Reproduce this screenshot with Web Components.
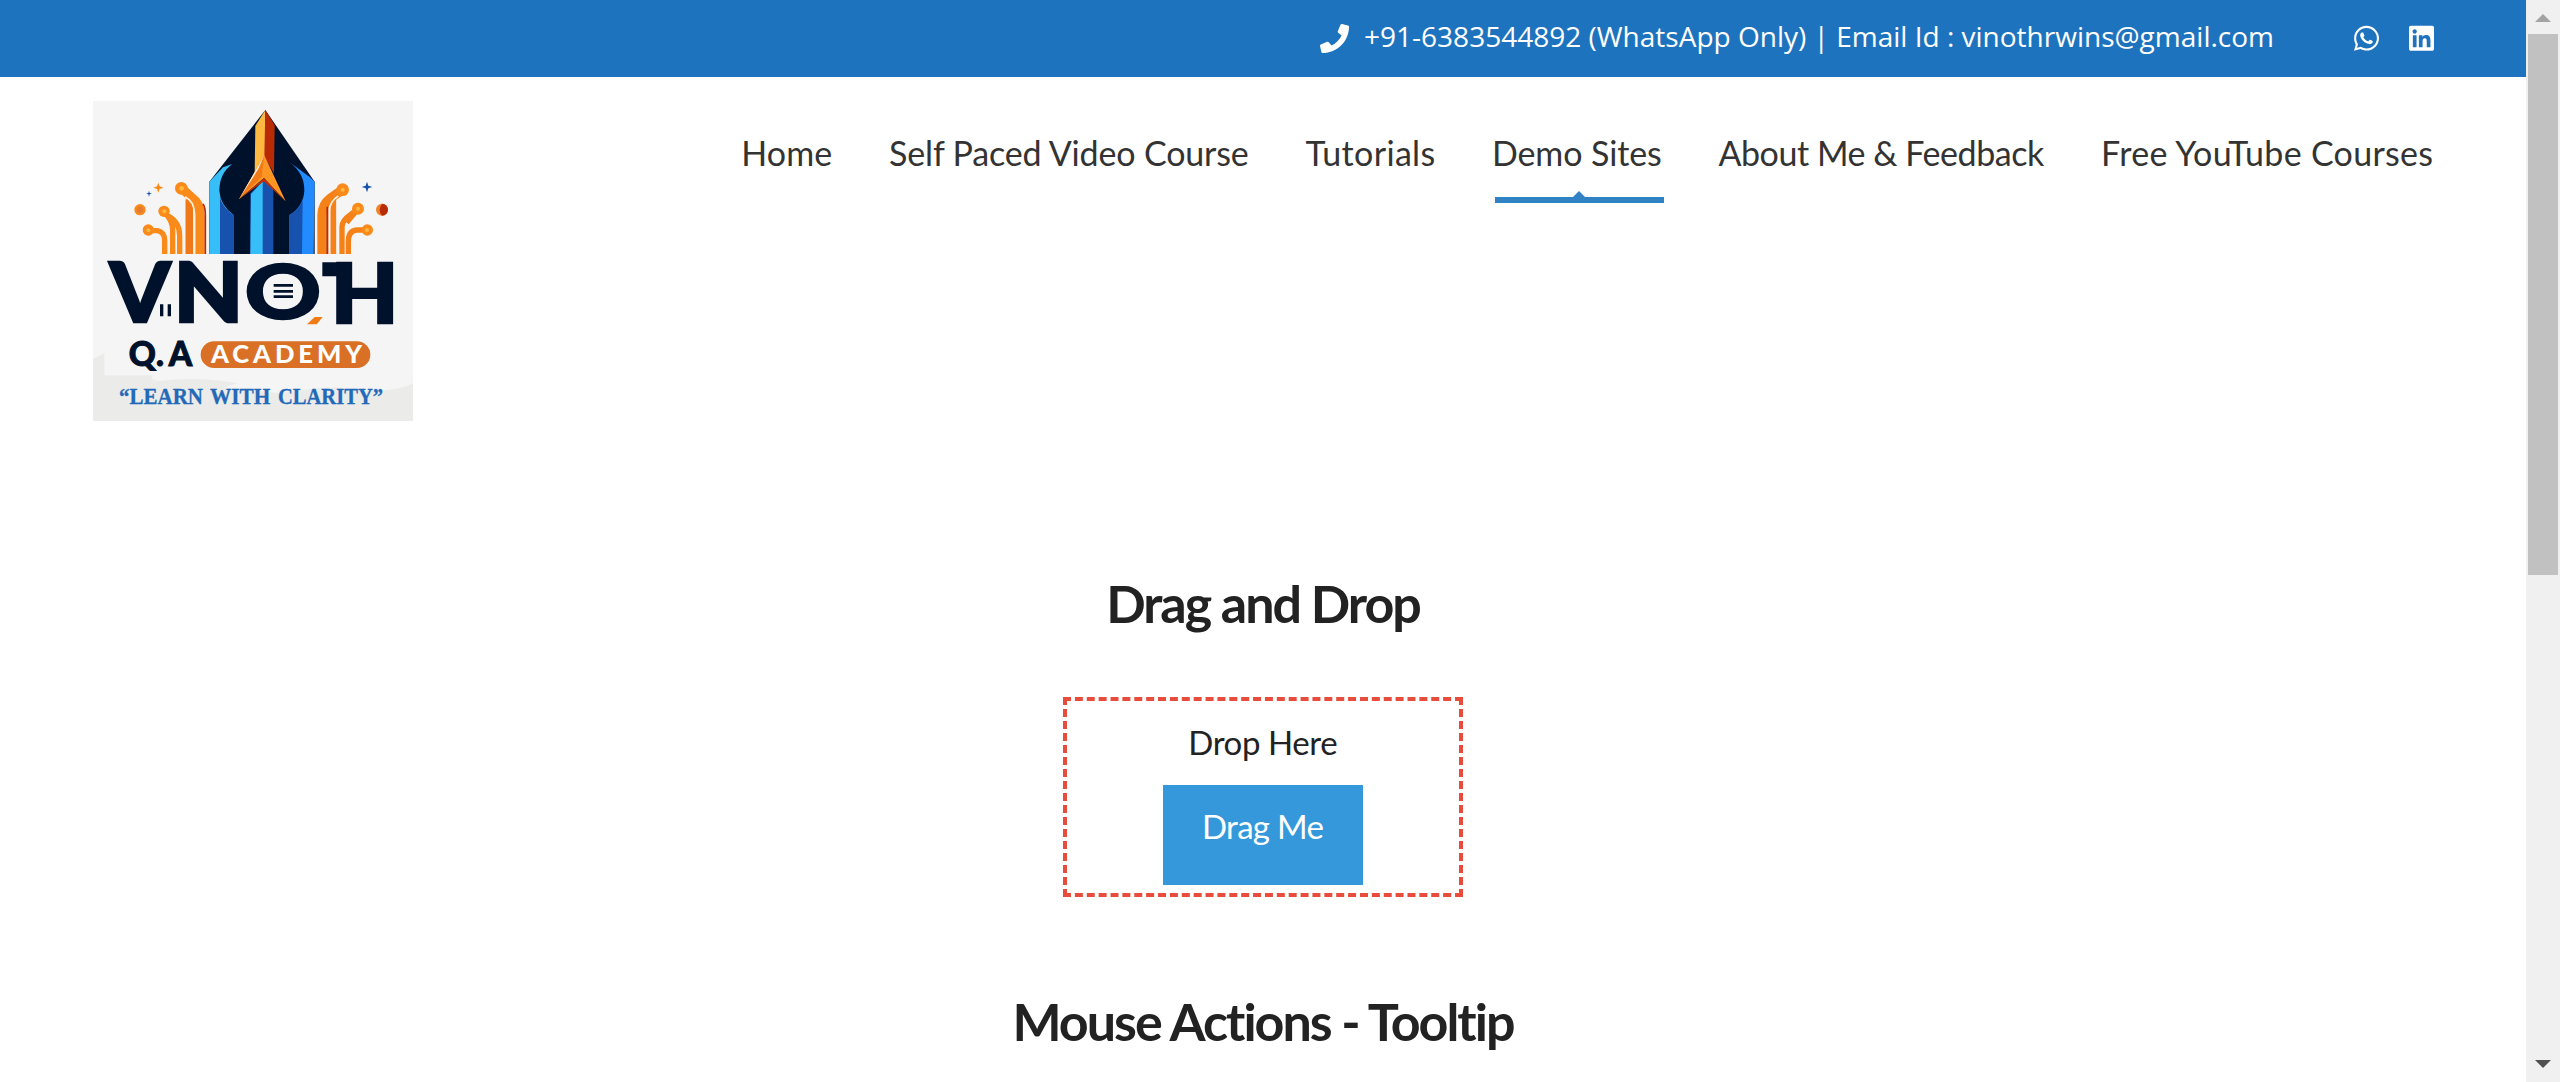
<!DOCTYPE html>
<html lang="en">
<head>
<meta charset="utf-8">
<title>Vinoth Q.A Academy</title>
<style>
html,body{margin:0;height:100%;overflow:hidden;background:#fff}
</style>
</head>
<body>
<demo-page></demo-page>
<script>
function define(name, html) {
  const t = document.createElement('template');
  t.innerHTML = html;
  customElements.define(name, class extends HTMLElement {
    constructor() {
      super();
      this.attachShadow({mode: 'open'}).append(t.content.cloneNode(true));
    }
  });
}

// Text whose tracking is adjusted so that its ink spans the width given in "span".
customElements.define('fit-text', class extends HTMLElement {
  constructor() {
    super();
    this.attachShadow({mode: 'open'}).innerHTML = '<style>:host{display:inline-block;white-space:nowrap}</style><slot></slot>';
  }
  connectedCallback() {
    const text = this.textContent, cs = getComputedStyle(this);
    const c = document.createElement('canvas').getContext('2d');
    c.font = cs.fontWeight + ' ' + cs.fontSize + ' ' + cs.fontFamily;
    const m = c.measureText(text);
    const ink = m.actualBoundingBoxLeft + m.actualBoundingBoxRight;
    const s = (this.getAttribute('span') - ink) / (text.length - 1);
    this.style.letterSpacing = s.toFixed(3) + 'px';
    this.style.marginRight = (-s).toFixed(3) + 'px';
  }
});

define('top-bar', `
<style>
:host{display:flex;justify-content:flex-end;align-items:center;height:77px;background:#1e73be;color:#fff;padding-right:92.5px;box-sizing:border-box;font:28px/38px "Open Sans",sans-serif}
.contact{display:flex;align-items:center;white-space:nowrap;margin-right:80px;padding-bottom:5px}
.phone{width:29px;height:29px;margin:5px 15px 0 0}
.social{display:flex;gap:29.5px}
svg{display:block;fill:currentColor}
.social svg{width:25px;height:28.6px}
</style>
<div class="contact">
<svg class="phone" viewBox="0 0 512 512"><path d="M493.4 24.6l-104-24c-11.3-2.6-22.9 3.3-27.5 13.9l-48 112c-4.200 9.800-1.400 21.300 6.900 28l60.600 49.600c-36 76.700-98.900 140.500-177.200 177.200l-49.600-60.600c-6.800-8.300-18.200-11.100-28-6.900l-112 48C3.900 366.500-2 378.100.6 389.400l24 104C27.100 504.200 36.700 512 48 512c256.100 0 464-207.500 464-464 0-11.200-7.700-20.900-18.600-23.400z"/></svg>
<fit-text span="907">+91-6383544892 (WhatsApp Only) | Email Id : vinothrwins@gmail.com</fit-text>
</div>
<div class="social">
<svg viewBox="0 0 448 512"><path d="M380.900 97.100C339 55.100 283.200 32 223.900 32c-122.400 0-222 99.600-222 222 0 39.100 10.200 77.300 29.600 111L0 480l117.700-30.900c32.400 17.700 68.900 27 106.100 27h.1c122.300 0 224.100-99.600 224.100-222 0-59.300-25.200-115-67.100-157zm-157 341.600c-33.200 0-65.700-8.900-94-25.700l-6.700-4-69.800 18.300L72 359.200l-4.400-7c-18.500-29.400-28.200-63.300-28.200-98.200 0-101.700 82.800-184.500 184.600-184.500 49.300 0 95.600 19.200 130.400 54.100 34.800 34.900 56.200 81.200 56.100 130.500 0 101.800-84.900 184.600-186.600 184.600zm101.200-138.200c-5.500-2.800-32.800-16.200-37.900-18-5.100-1.900-8.800-2.800-12.500 2.800-3.700 5.600-14.300 18-17.600 21.800-3.200 3.700-6.500 4.200-12 1.400-32.600-16.300-54-29.100-75.500-66-5.700-9.800 5.700-9.100 16.300-30.300 1.800-3.700.9-6.900-.5-9.700-1.400-2.800-12.500-30.100-17.100-41.200-4.500-10.800-9.100-9.300-12.500-9.500-3.200-.2-6.900-.2-10.600-.2-3.700 0-9.700 1.400-14.800 6.900-5.100 5.600-19.400 19-19.400 46.300 0 27.300 19.900 53.700 22.600 57.400 2.800 3.700 39.100 59.700 94.800 83.800 35.200 15.200 49 16.500 66.600 13.900 10.700-1.600 32.800-13.400 37.400-26.400 4.600-13 4.600-24.100 3.200-26.400-1.300-2.500-5-3.900-10.500-6.600z"/></svg>
<svg viewBox="0 0 448 512"><path d="M416 32H31.900C14.300 32 0 46.500 0 64.300v383.400C0 465.500 14.300 480 31.900 480H416c17.600 0 32-14.500 32-32.300V64.300c0-17.800-14.400-32.300-32-32.300zM135.400 416H69V202.200h66.500V416zm-33.200-243c-21.300 0-38.500-17.300-38.500-38.500S80.900 96 102.200 96c21.200 0 38.500 17.300 38.500 38.500 0 21.300-17.200 38.500-38.500 38.500zm282.100 243h-66.400V312c0-24.800-.5-56.700-34.500-56.700-34.600 0-39.900 27-39.900 54.900V416h-66.400V202.200h63.700v29.200h.9c8.900-16.800 30.600-34.500 62.900-34.500 67.200 0 79.700 44.300 79.700 101.900V416z"/></svg>
</div>`);

define('site-logo', `
<style>:host{display:block;width:320px;height:320px}svg{display:block}</style>
<svg width="320" height="320" viewBox="39 33 960 960">
<rect x="39" y="33" width="960" height="960" fill="#f5f5f5"/>
<path d="M39 806l34-16v66h150q-20 10 10 14l-20 6q130-20 260 4l-40 12 170 18q180-30 200-10 140 10 196-20v113H39z" fill="#ebebea"/>
<g>
<path d="M556 60L704 275V492H388V275z" fill="#00112b"/>
<path d="M388 275L429 232 457 222Q418 250 418 302Q420 345 462 376V492H388z" fill="#37bdf8"/>
<path d="M420 325Q430 355 462 376V492H420z" fill="#1652ae"/>
<path d="M704 275L690 262 628 216Q674 250 673 302Q670 350 627 376V492H701z" fill="#218bff"/>
<path d="M668 330Q658 358 627 376V492H666z" fill="#1652ae"/>
<path d="M511 310L552 270 580 295V492H511z" fill="#1652ae"/>
<path d="M513 312L548 274V492H511z" fill="#37bdf8"/>
<path d="M556 60L526 108 524 250 555 205z" fill="#ffb840"/>
<path d="M556 60L584 106 582 250 553 200z" fill="#b92b04"/>
<path d="M553 196L617 334 552 264 477 328z" fill="#ff9623"/>
<path d="M553 196L477 328 545 260z" fill="#f27b19"/>
<path d="M553 196L477 328 535 237z" fill="#fff1df"/>
<path d="M552 264L477 328 551 274 617 334z" fill="#bb3209"/>
</g>
<g fill="none" stroke="#fa8b1b" stroke-width="16">
<path d="M204 422H232Q254 426 254 452V492"/>
<path d="M252 366Q280 393 278 422V492M265 378Q299 396 299 438V492"/>
<path d="M328 492V328" stroke="#ef7919" stroke-width="23"/>
<path d="M306 296L338 325Q360 340 360 375V492" stroke-width="28"/>
<path d="M315 320Q342 334 343 368V492" stroke="#fff1df" stroke-width="5"/>
<path d="M369 342Q377 354 376 380V492" stroke="#b92b04" stroke-width="5"/>
<g stroke="#f58219"><path d="M862 420H830Q805 422 805 455V492"/>
<path d="M834 357L810 375Q786 392 786 410V492M834 357L800 398"/>
<path d="M760 492V328" stroke-width="17"/>
<path d="M788 299L752 324Q726 344 726 375V492" stroke-width="28"/></g>
<path d="M775 318Q748 334 747 368V492" stroke="#fff1df" stroke-width="5"/>
<path d="M742 350V492" stroke="#b92b04" stroke-width="6"/>
</g>
<g fill="#fa8b1b"><circle cx="304" cy="295" r="19"/><circle cx="252" cy="364" r="17"/><circle cx="205" cy="420" r="17"/><circle cx="180" cy="359" r="17"/><circle cx="788" cy="299" r="19"/><circle cx="834" cy="356" r="18"/><circle cx="862" cy="420" r="17"/></g>
<g fill="#ffb840"><circle cx="305" cy="295" r="7"/><circle cx="253" cy="364" r="6"/><circle cx="205" cy="421" r="6"/><circle cx="788" cy="299" r="6"/><circle cx="834" cy="356" r="6"/><circle cx="861" cy="420" r="6"/></g>
<circle cx="180" cy="359" r="10" fill="#e57b2c"/>
<circle cx="906" cy="359" r="18" fill="#ef8325"/><path d="M906 341a18 18 0 0 1 0 36q-14-16 0-36" fill="#b92b04"/>
<path d="M235 278l4 11 11 4-11 4-4 11-4-11-11-4 11-4z" fill="#fa8b1b"/>
<path d="M207 302l2 7 7 2-7 2-2 7-2-7-7-2 7-2zM861 275l4 12 12 4-12 4-4 12-4-12-12-4 12-4z" fill="#1652ae"/>
<g fill="#00112b" stroke="#00112b" font-family="Lato,sans-serif" font-weight="900">
<g font-size="246" stroke-width="8"><text x="89" y="696" textLength="182" lengthAdjust="spacingAndGlyphs">V</text>
<text x="281" y="696" font-size="243" textLength="208" lengthAdjust="spacingAndGlyphs">N</text>
<text x="753" y="699" font-size="246" textLength="202" lengthAdjust="spacingAndGlyphs">H</text></g>
<text x="493" y="687" font-size="226" stroke-width="4" textLength="232" lengthAdjust="spacingAndGlyphs">O</text>
<path stroke="none" d="M727 517H800V559H727zM240 643h10v36h-10zM263 643h10v36h-10zM581 582h58v8h-58zM581 600h58v8h-58zM581 616h58v8h-58z"/>
<text x="146 228 266" y="828" font-size="100" stroke-width="3">Q.A</text>
</g>
<path d="M704 681h24l-18 22h-29z" fill="#f07b15"/>
<rect x="362" y="754" width="509" height="80" rx="40" fill="#d97025"/>
<text x="393" y="819" font-family="Lato,sans-serif" font-weight="900" font-size="72" letter-spacing="11" fill="#fff" textLength="465" lengthAdjust="spacingAndGlyphs">ACADEMY</text>
<g font-family="'Liberation Serif',serif" font-weight="700" font-size="70" fill="#2269b8" stroke="#2269b8" stroke-width="1">
<text x="117" y="943" textLength="252" lengthAdjust="spacingAndGlyphs">“LEARN</text>
<text x="390" y="943" textLength="181" lengthAdjust="spacingAndGlyphs">WITH</text>
<text x="594" y="943" textLength="315" lengthAdjust="spacingAndGlyphs">CLARITY”</text></g>
</svg>`);

define('nav-item', `
<style>
:host{display:block;position:relative;white-space:nowrap;color:#333;font:34px/50px Lato,sans-serif}
:host([active])::after{content:"";position:absolute;left:3px;right:-2px;top:69px;height:6px;background:#3182c4}
:host([active])::before{content:"";position:absolute;left:50%;margin-left:-4px;top:63px;border:6px solid transparent;border-top:0;border-bottom-color:#3182c4}
</style><slot></slot>`);

define('site-header', `
<style>
:host{display:flex;justify-content:space-between;align-items:flex-start;padding:24px 93px 0;height:344px;box-sizing:content-box}
nav{display:flex;gap:56.8px;padding-top:27px}
</style>
<site-logo></site-logo>
<nav><nav-item><fit-text span="87">Home</fit-text></nav-item><nav-item><fit-text span="359.500">Self Paced Video Course</fit-text></nav-item><nav-item><fit-text span="129">Tutorials</fit-text></nav-item><nav-item active><fit-text span="166">Demo Sites</fit-text></nav-item><nav-item><fit-text span="326.500">About Me &amp; Feedback</fit-text></nav-item><nav-item><fit-text span="329.500">Free YouTube Courses</fit-text></nav-item></nav>`);

define('section-title', `
<style>:host{display:block;text-align:center;white-space:nowrap;color:#222;font:700 52px/68px Lato,sans-serif;letter-spacing:-2px}</style><slot></slot>`);

define('drag-box', `
<style>:host{display:block;width:200px;height:100px;background:#3498db;color:#fff;text-align:center;line-height:82px}</style><slot></slot>`);

define('drop-zone', `
<style>:host{display:flex;flex-direction:column;align-items:center;gap:2px;box-sizing:border-box;width:400px;height:200px;border:4px dashed #e74c3c;color:#222;font:33px/82px Lato,sans-serif}</style>
<slot name="label"></slot><slot></slot>`);

define('scroll-bar', `
<style>
:host{display:flex;flex-direction:column;justify-content:space-between;align-items:center;width:34px;height:1082px;background:#f0f0f0;flex:none}
i{display:block;border:8px solid transparent}
.up{border-top:0;border-bottom-color:#a3a3a3;margin-top:14px}
.thumb{width:30px;height:541px;background:#c1c1c1;margin:12px 0 auto}
.down{border-bottom:0;border-top-color:#505050;margin-bottom:14px}
</style><i class="up"></i><div class="thumb"></div><i class="down"></i>`);

define('demo-page', `
<style>
:host{display:flex;width:2560px;height:1082px;overflow:hidden;background:#fff}
.view{flex:1;min-width:0;height:1082px;overflow:hidden}
main{display:flex;flex-direction:column;align-items:center;padding-top:124px}
drop-zone{margin:60px 0 90px}
</style>
<div class="view"><top-bar></top-bar><site-header></site-header>
<main><section-title>Drag and Drop</section-title>
<drop-zone><fit-text slot="label" span="146">Drop Here</fit-text><drag-box><fit-text span="118.500">Drag Me</fit-text></drag-box></drop-zone>
<section-title>Mouse Actions - Tooltip</section-title></main></div>
<scroll-bar></scroll-bar>`);
</script>
</body>
</html>
